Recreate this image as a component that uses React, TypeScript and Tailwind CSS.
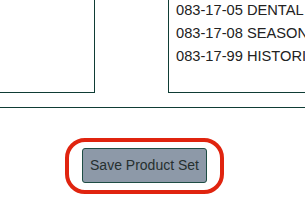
import React from 'react';

const codes = ['083-17-05 DENTAL', '083-17-08 SEASONAL', '083-17-99 HISTORICAL'];

export default function App() {
  return (
    <div className="w-[305px] h-[200px] overflow-hidden bg-white font-['Liberation_Sans',Arial,sans-serif]">
      <div className="flex h-[93px]">
        <div className="w-[95px] shrink-0 border-r border-b border-[#0f3d35]" />
        <div className="w-[73px] shrink-0" />
        <div className="w-[200px] shrink-0 border-l border-b border-[#0f3d35] pl-[7px] -mt-px">
          <ul className="text-[14.67px] leading-[23px] text-[#222] whitespace-nowrap">
            {codes.map(c => (
              <li key={c}>{c}</li>
            ))}
          </ul>
        </div>
      </div>
      <div className="mt-[14px] h-px bg-[#0f3d35]" />
      <div className="mt-[30px] ml-[65px] w-fit rounded-[20px] border-4 border-[#e0240f] px-[13px] pt-[6px] pb-[7px]">
        <button className="w-[125px] h-[35px] rounded-[3px] border border-[#1e4d44] bg-[#8d99a8] text-[14px] text-[#26302f]">
          Save Product Set
        </button>
      </div>
    </div>
  );
}
